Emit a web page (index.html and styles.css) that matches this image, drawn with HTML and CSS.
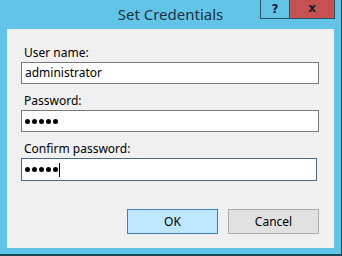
FILE: index.html
```html
<!DOCTYPE html>
<html>
<head>
<meta charset="utf-8">
<link rel="stylesheet" href="styles.css">
</head>
<body>
<div class="window">
  <div class="titlebar">
    <div class="title">Set Credentials</div>
    <div class="controls">
      <div class="ctl help">?</div>
      <div class="ctl close">x</div>
    </div>
  </div>
  <div class="client">
    <div class="field">
      <div class="label">User name:</div>
      <div class="input">administrator</div>
    </div>
    <div class="field">
      <div class="label">Password:</div>
      <div class="input"><span class="dots"><i></i><i></i><i></i><i></i><i></i></span></div>
    </div>
    <div class="field">
      <div class="label">Confirm password:</div>
      <div class="input focused"><span class="dots"><i></i><i></i><i></i><i></i><i></i></span><span class="caret"></span></div>
    </div>
    <div class="buttons">
      <div class="button default">OK</div>
      <div class="button">Cancel</div>
    </div>
  </div>
</div>
</body>
</html>
```
FILE: styles.css
```css
html, body {
  margin: 0;
  padding: 0;
}
body {
  width: 342px;
  height: 256px;
  overflow: hidden;
  background: #62c5e8;
  font-family: "Noto Sans", "Open Sans", sans-serif;
}
.window {
  box-sizing: border-box;
  width: 342px;
  height: 256px;
  background: #62c5e8;
  border-right: 1px solid #1d4a5a;
  border-bottom: 2px solid #1d4a5a;
  display: flex;
  flex-direction: column;
}
.titlebar {
  position: relative;
  height: 29px;
  flex: none;
}
.title {
  text-align: center;
  font-size: 15px;
  line-height: 20px;
  padding-top: 4px;
  color: #1b3142;
}
.controls {
  position: absolute;
  top: -1px;
  right: 6px;
  display: flex;
}
.ctl {
  box-sizing: border-box;
  height: 20px;
  border: 1px solid #24556a;
  display: flex;
  align-items: center;
  justify-content: center;
  font-weight: bold;
  color: #0d1f35;
  font-family: "DejaVu Sans", sans-serif;
}
.help {
  width: 29px;
  font-size: 12px;
  border-right: none;
  background: #62c5e8;
}
.close {
  width: 46px;
  font-size: 12px;
  background: #c75050;
  padding-bottom: 2px;
}
.client {
  margin: 0 7px 6px 7px;
  flex: 1;
  background: #f0f0f0;
  padding: 16px 15px 0 14px;
  display: flex;
  flex-direction: column;
}
.field {
  display: flex;
  flex-direction: column;
  margin-bottom: 9px;
}
.label {
  font-size: 12px;
  line-height: 15px;
  padding-left: 3px;
  margin-bottom: 2px;
  color: #000;
}
.input {
  box-sizing: border-box;
  height: 22px;
  border: 1px solid #7a7a7a;
  background: #fff;
  font-size: 12px;
  line-height: 20px;
  padding-left: 3px;
  color: #000;
  display: flex;
  align-items: center;
}
.input.focused {
  border-color: #4d6b80;
  margin-right: 2px;
  height: 23px;
}
.dots {
  display: flex;
  gap: 2px;
}
.dots i {
  width: 5px;
  height: 5px;
  border-radius: 50%;
  background: #000;
}
.caret {
  width: 1px;
  height: 14px;
  background: #000;
  margin-left: 1px;
}
.buttons {
  margin-top: 19px;
  display: flex;
  justify-content: flex-end;
  gap: 10px;
}
.button {
  box-sizing: border-box;
  width: 91px;
  height: 25px;
  border: 1px solid #adadad;
  background: #e1e1e1;
  font-size: 12px;
  display: flex;
  align-items: center;
  justify-content: center;
  color: #000;
}
.button.default {
  background: #bee6fd;
  border-color: #3c7fb1;
}
```
